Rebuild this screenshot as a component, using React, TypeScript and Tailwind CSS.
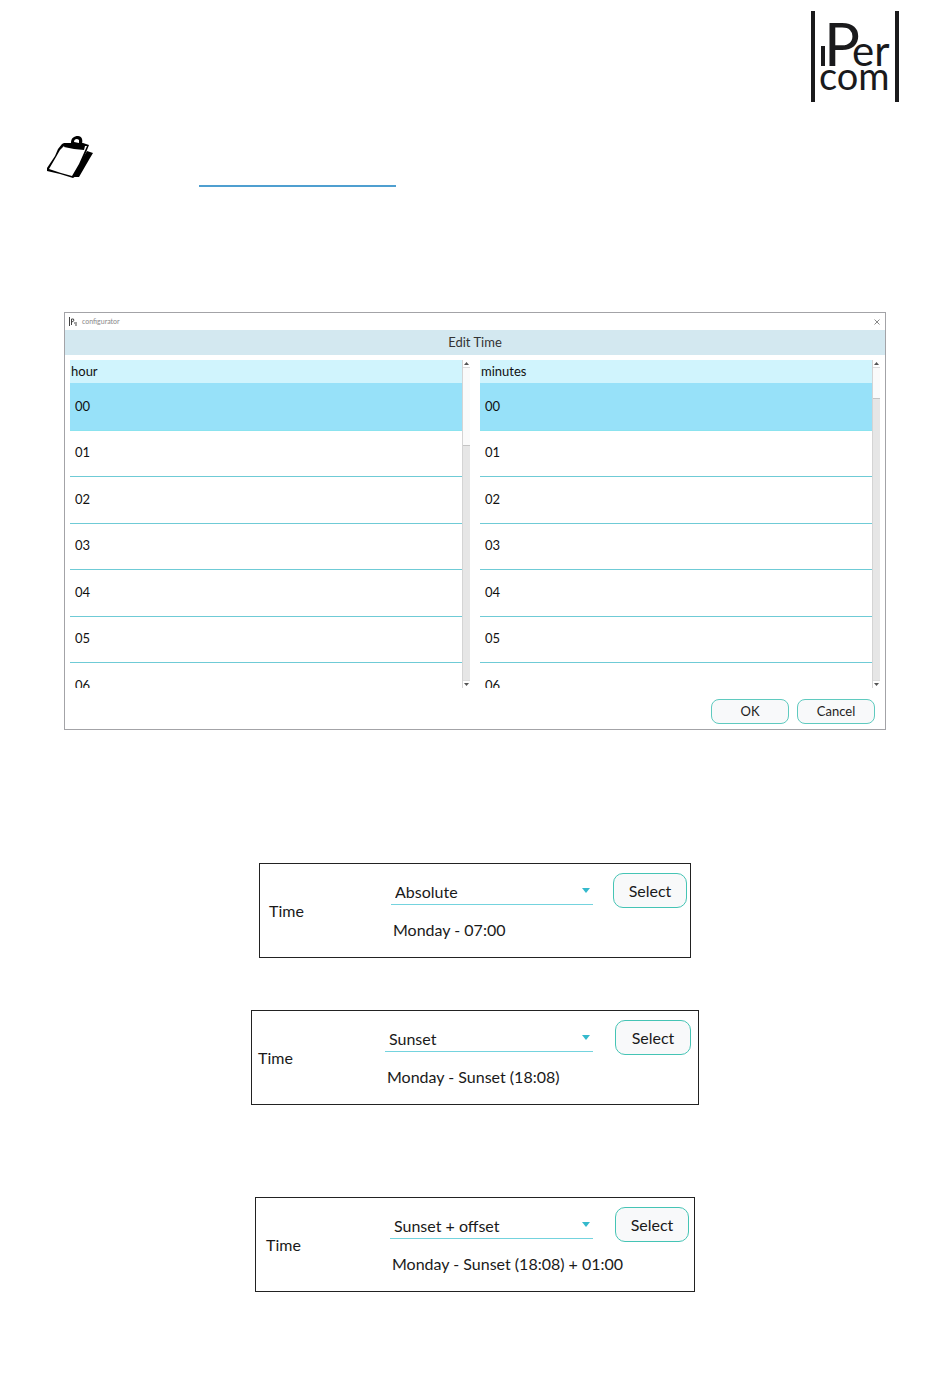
interface TimeListType{
    title:string,
    thumb:string
}

interface TimeCardType{
    id:string,
    mode:string,
    value:string,
    card:string,
    label:string,
    button:string
}

const rows = ["00", "01", "02", "03", "04", "05", "06"]
const modes = ["Absolute", "Sunset", "Sunset + offset"]

function Logo(){
    return(
        <svg width="90" height="92" viewBox="0 0 90 92" role="img" aria-label="iPercom" fill="#1a1a1c" fontFamily="Lato, sans-serif">
            <rect x="1" y="1" width="4" height="91" />
            <rect x="85" y="1" width="4" height="91" />
            <rect x="11" y="36" width="4" height="20" />
            <text y="56">
                <tspan x="14" fontSize="60">P</tspan>
                <tspan x="42" fontSize="42">er</tspan>
            </text>
            <text x="9" y="80" fontSize="38">com</text>
        </svg>
    )
}

function Clipboard(){
    return(
        <svg width="48" height="44" viewBox="0 0 48 44" aria-hidden="true">
            <path d="M41 15 L47 17 L44 22 L33 41 L26 41 Z" fill="#000" />
            <path d="M18 7 L16 8 L12 13 L9 20 L1 32 L1 35 L14 38 L27 42 L30 40 L35 29 L43 9 L37 7 Z" fill="#000" />
            <path d="M18 10 L14 14 L10 21 L3 33 L15 37 L26 40 L33 28 L41 10 Z" fill="#fff" />
            <path d="M19 8 L25 7 C25 2 28 0 32 0 C36 0 37 4 36 8 L39 10 L38 14 L28 13 L18 11 Z" fill="#000" />
            <path d="M28 6 C28 3 31 2 33 4 L33 7 Z" fill="#fff" />
        </svg>
    )
}

function TimeList({title, thumb}:TimeListType){
    return(
        <div className="flex h-[328px] overflow-hidden">
            <div className="flex-1">
                <table className="w-full border-collapse text-left">
                    <thead>
                        <tr className="h-[23px] bg-[#d0f4fd]">
                            <th className="p-0 pl-px text-[13px] leading-[23px] font-normal">{title}</th>
                        </tr>
                    </thead>
                    <tbody>
                        {rows.map((row, i) => (
                            <tr key={row} className={i === 0 ? "bg-[#97e1f9]" : ""}>
                                <td className={`border-b p-0 pl-[5px] text-[13px] ${i % 2 === 0 ? "h-[47px]" : "h-[46px]"} ${i === 0 ? "border-[#8be3ef]" : "border-[#6fcbd6]"}`}>{row}</td>
                            </tr>
                        ))}
                    </tbody>
                </table>
            </div>
            <div className="flex w-2 flex-col border-l border-[#d4d4d4] bg-[#e6e6e6]">
                <div className="flex h-2 items-center justify-center border-b border-[#dcdcdc] bg-white">
                    <svg width="5" height="3" viewBox="0 0 5 3"><path d="M0 3 L2.5 0 L5 3 Z" fill="#555" /></svg>
                </div>
                <div className={`border-b border-[#c4c4c4] bg-[#fafafa] ${thumb}`}></div>
                <div className="mt-auto flex h-2 items-center justify-center border-t border-[#dcdcdc] bg-white">
                    <svg width="5" height="3" viewBox="0 0 5 3"><path d="M0 0 L2.5 3 L5 0 Z" fill="#555" /></svg>
                </div>
            </div>
        </div>
    )
}

function EditTime(){
    return(
        <div className="mx-16 border border-[#a3a3a7]">
            <div className="flex h-[17px] items-center pr-[5px] pl-1">
                <svg width="9" height="9" viewBox="0 0 9 9" aria-hidden="true" fill="none" stroke="#444">
                    <path d="M0.5 0 V9 M2.5 8 V2 H4.5 Q6 4 3 5 M5 6 H8 M6 8 L8 8" />
                </svg>
                <span className="ml-1 flex-1 text-[7px] leading-none text-[#888]">configurator</span>
                <button aria-label="Close">
                    <svg width="6" height="6" viewBox="0 0 6 6" stroke="#888"><path d="M0.5 0.5 L5.5 5.5 M5.5 0.5 L0.5 5.5" /></svg>
                </button>
            </div>
            <h1 className="h-[25px] bg-[#d3e8f0] text-center text-[13px] leading-[25px] font-normal text-[#333]">Edit Time</h1>
            <div className="mt-[5px] grid grid-cols-2 gap-[10px] px-[5px]">
                <TimeList title="hour" thumb="h-[78px]" />
                <TimeList title="minutes" thumb="h-[31px]" />
            </div>
            <div className="flex justify-end gap-2 pt-[11px] pr-[10px] pb-[5px] text-[13px] text-[#222]">
                <button className="h-[25px] w-[78px] rounded-lg border border-[#5fcabf] bg-[#f8f9fa]">OK</button>
                <button className="h-[25px] w-[78px] rounded-lg border border-[#5fcabf] bg-[#f8f9fa]">Cancel</button>
            </div>
        </div>
    )
}

function TimeCard({id, mode, value, card, label, button}:TimeCardType){
    return(
        <div className={`mx-auto flex h-[95px] border border-[#222] text-base text-[#1a1a1a] ${card}`}>
            <label htmlFor={id} className={`shrink-0 self-center ${label}`}>Time</label>
            <div className="min-w-0 flex-1 pt-[10px]">
                <div className="relative">
                    <select id={id} defaultValue={mode} className="block h-[31px] w-full appearance-none border-b border-[#74d3de] bg-transparent pt-[6px] pl-1 outline-none">
                        {modes.map((m) => <option key={m}>{m}</option>)}
                    </select>
                    <svg className="pointer-events-none absolute top-[14px] right-[3px]" width="8" height="5" viewBox="0 0 8 5"><path d="M0 0 H8 L4 5 Z" fill="#35b9cc" /></svg>
                </div>
                <div className="pt-[13px] pl-[2px] leading-6 whitespace-nowrap">{value}</div>
            </div>
            <button className={`mt-[9px] h-[35px] shrink-0 rounded-[10px] border border-[#45c4b5] bg-[#f8f9fa] ${button}`}>Select</button>
        </div>
    )
}

export default function App(){
    return(
        <div className="min-h-screen bg-white pb-24 font-['Lato',sans-serif] text-[#111]">
            <div className="flex justify-end pt-[10px] pr-[50px]">
                <Logo />
            </div>
            <div className="mt-[34px] flex h-[51px] items-start pl-[46px]">
                <Clipboard />
                <a href="#" aria-label="More information" className="ml-[105px] h-[51px] w-[197px] border-b-2 border-[#4f9fd0]"></a>
            </div>
            <div className="mt-[125px]">
                <EditTime />
            </div>
            <div className="mt-[133px]">
                <TimeCard id="absolute" mode="Absolute" value="Monday - 07:00" card="w-[432px] pl-[9px] pr-[3px]" label="w-[122px]" button="ml-5 w-[74px]" />
            </div>
            <div className="mt-[52px]">
                <TimeCard id="sunset" mode="Sunset" value="Monday - Sunset (18:08)" card="w-[448px] pl-[6px] pr-[7px]" label="w-[127px]" button="ml-[22px] w-[76px]" />
            </div>
            <div className="mt-[92px]">
                <TimeCard id="offset" mode="Sunset + offset" value="Monday - Sunset (18:08) + 01:00" card="w-[440px] pl-[10px] pr-[5px]" label="w-[124px]" button="ml-[22px] w-[74px]" />
            </div>
        </div>
    )
}
